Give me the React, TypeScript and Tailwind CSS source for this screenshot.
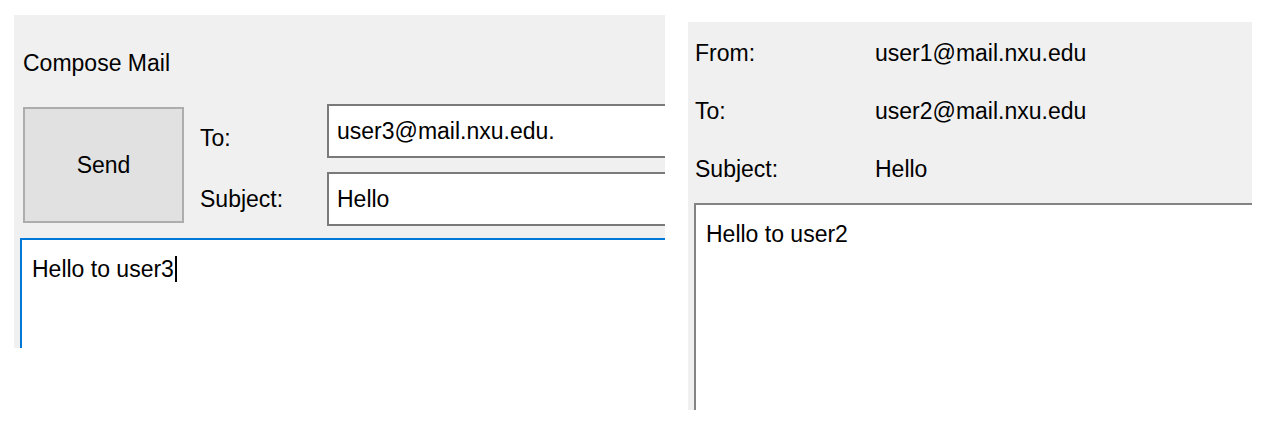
const font = { fontFamily: '"Liberation Sans", Arial, sans-serif' }

const ComposePanel = () => {
  return (
    <div className="relative w-[651px] h-[333px] mt-[15px] ml-[14px] bg-[#f0f0f0] overflow-hidden shrink-0">
      <div className="pl-[9px] pt-[35px] h-[89px] text-[23px] leading-[26px] text-black">Compose Mail</div>
      <div className="flex items-center h-[122px] pl-[9px]">
        <button className="shrink-0 w-[161px] h-[116px] bg-[#e1e1e1] border-2 border-[#adadad] text-[23px] text-black">
          Send
        </button>
        <div className="shrink-0 flex flex-col ml-[16px] w-[127px] text-[23px] text-black">
          <div className="h-[68px] flex items-center">To:</div>
          <div className="h-[54px] flex items-center">Subject:</div>
        </div>
        <div className="shrink-0 flex flex-col gap-[14px]">
          <div className="w-[420px] h-[54px] bg-white border-2 border-[#7a7a7a] pl-[8px] flex items-center text-[23px] text-black">
            user3@mail.nxu.edu.
          </div>
          <div className="w-[420px] h-[54px] bg-white border-2 border-[#7a7a7a] pl-[8px] flex items-center text-[23px] text-black">
            Hello
          </div>
        </div>
      </div>
      <div className="ml-[6px] mt-[12px] w-[700px] h-[200px] bg-white border-t-2 border-l-2 border-[#0078d7] pl-[10px] pt-[16px]">
        <div className="flex items-center h-[26px] text-[23px] leading-[26px] text-black">
          Hello to user3
          <span className="inline-block w-[2px] h-[26px] bg-black ml-[1px]" />
        </div>
      </div>
    </div>
  )
}

const ReadPanel = () => {
  const rows = [
    ['From:', 'user1@mail.nxu.edu'],
    ['To:', 'user2@mail.nxu.edu'],
    ['Subject:', 'Hello'],
  ]
  return (
    <div className="relative w-[564px] h-[388px] mt-[22px] ml-[23px] bg-[#f0f0f0] overflow-hidden shrink-0">
      <div className="pt-[2px]">
        {rows.map(([label, value]) => (
          <div key={label} className="flex items-center h-[58px] text-[23px] text-black">
            <div className="w-[187px] pl-[7px]">{label}</div>
            <div>{value}</div>
          </div>
        ))}
      </div>
      <div className="ml-[6px] mt-[5px] w-[600px] h-[260px] bg-white border-t-2 border-l-2 border-[#838383] pl-[10px] pt-[16px]">
        <div className="h-[26px] text-[23px] leading-[26px] text-black">Hello to user2</div>
      </div>
    </div>
  )
}

export default function App() {
  return (
    <div className="w-[1274px] h-[429px] bg-white flex items-start overflow-hidden" style={font}>
      <ComposePanel />
      <ReadPanel />
    </div>
  )
}
